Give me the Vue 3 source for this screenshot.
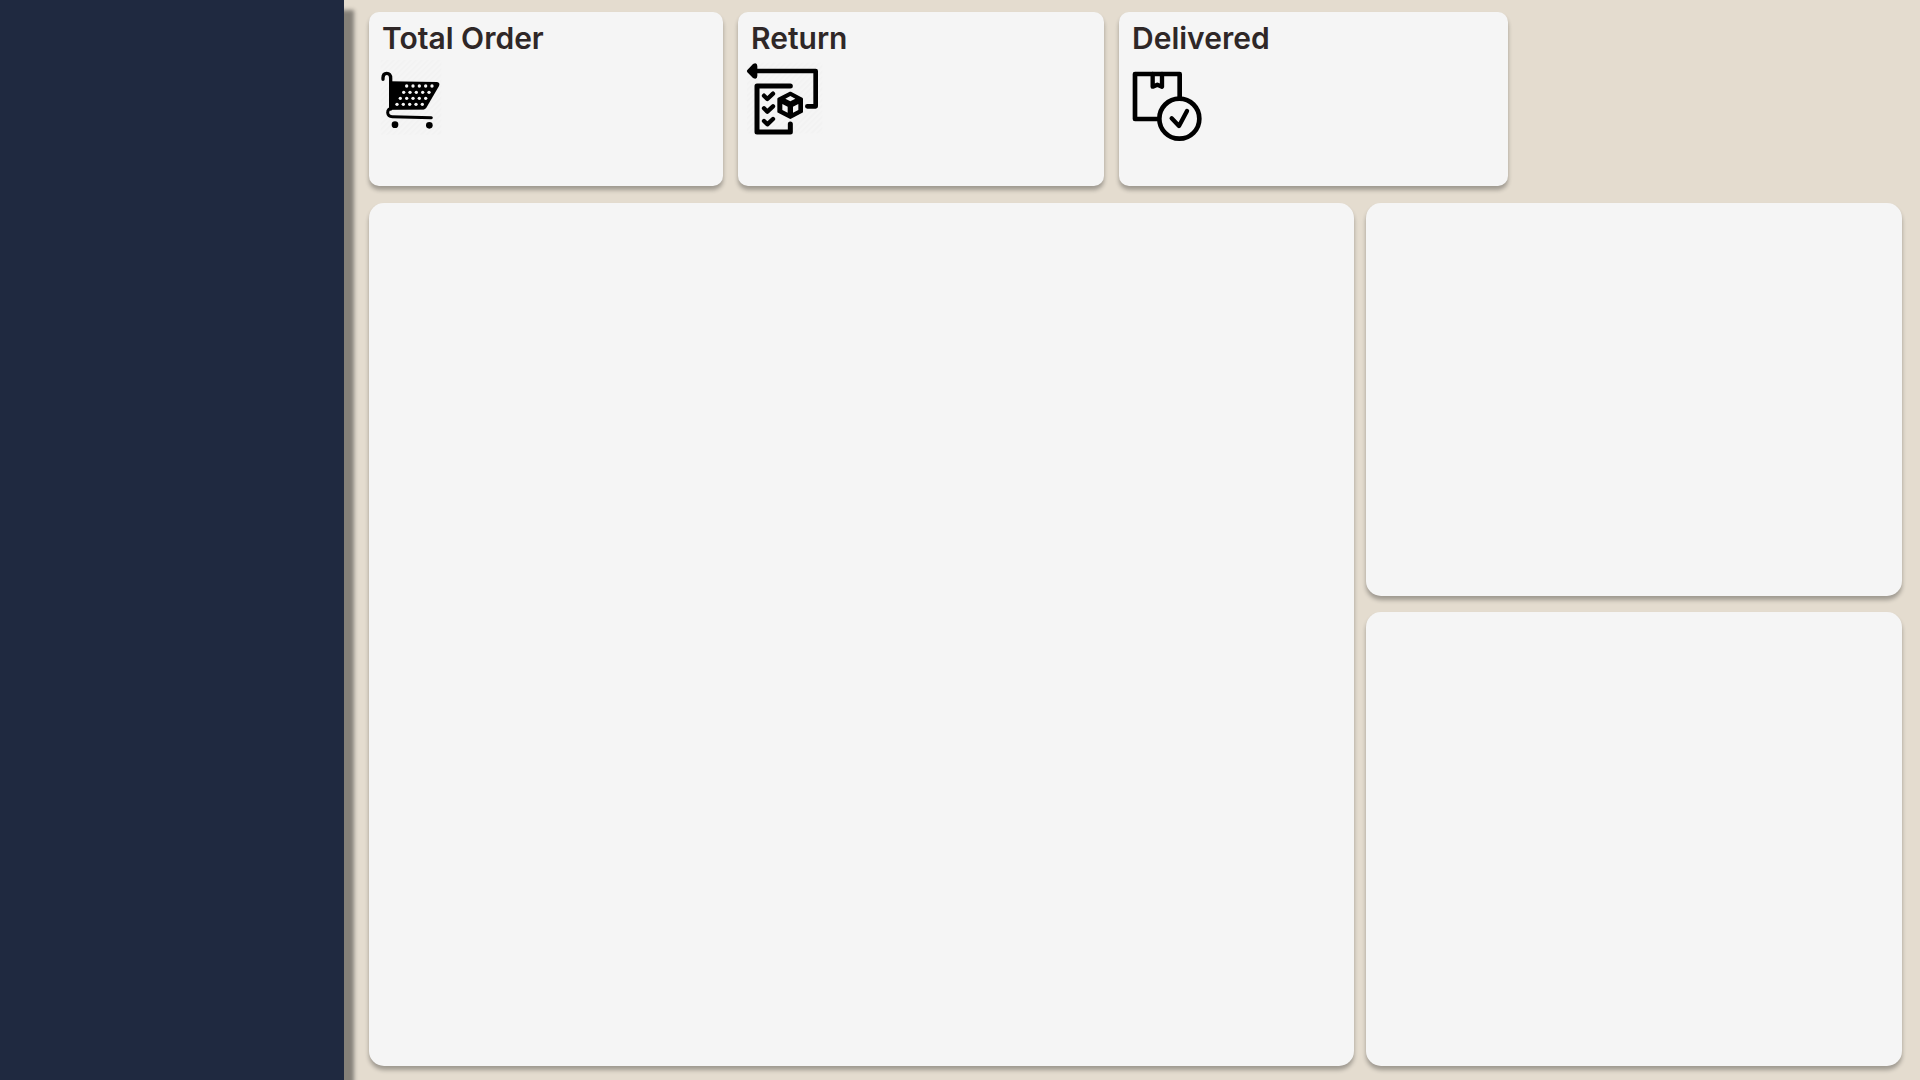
<script setup>
const cartHoles = [
  { y: 78, x: 110 },
  { y: 97, x: 101 },
  { y: 115, x: 91 },
  { y: 133, x: 81 },
].flatMap((row) => [0, 1, 2, 3, 4].map((i) => ({ x: row.x + i * 19, y: row.y })))
</script>

<template>
  <div class="dashboard">
    <aside class="sidebar"></aside>
    <main class="content">
      <div class="stats">
        <section class="card stat">
          <h2>Total Order</h2>
          <svg class="icon" viewBox="24 0 240 240" aria-hidden="true">
            <defs>
              <pattern id="hatch" width="12" height="12" patternUnits="userSpaceOnUse" patternTransform="rotate(45)">
                <rect width="5" height="12" fill="#f2f2f2" />
              </pattern>
            </defs>
            <rect x="32" y="0" width="182" height="224" fill="url(#hatch)" />
            <path class="line" stroke-width="10" d="M39 58V53Q39 40 50 40Q62 40 62 55V147" />
            <path d="M60 64L201 66Q211 68 207 78L169 143Q166 148 160 148H60Z" />
            <path class="line" stroke-width="9" d="M160 144L66 145Q53 146 53 158Q54 170 67 170L184 173" />
            <circle cx="75" cy="194" r="10" />
            <circle cx="178" cy="196" r="10" />
            <circle v-for="hole in cartHoles" :key="`${hole.x}-${hole.y}`" class="light" :cx="hole.x" :cy="hole.y" r="5" />
          </svg>
        </section>
        <section class="card stat">
          <h2>Return</h2>
          <svg class="icon" viewBox="36 30 240 240" aria-hidden="true">
            <rect x="36" y="38" width="226" height="212" fill="url(#hatch)" />
            <path class="line" stroke-width="14" d="M60 63H242V169H217" />
            <path d="M37 60L54 42Q66 35 67 48V78Q66 91 54 84L37 67Q34 63 37 60Z" />
            <path class="line" stroke-width="15" d="M166 108H66V246H166V222" />
            <path class="line" stroke-width="13" d="M87 137L97 147L114 131M87 175L97 185L114 169M87 213L97 223L114 207" />
            <path class="line solid" stroke-width="8" d="M166 129L200 147V185L166 203L131 185V147Z" />
            <path class="light" d="M166 138L181 146L166 154L151 146ZM142 162L158 170V188L142 180ZM174 170L190 162V180L174 188Z" />
          </svg>
        </section>
        <section class="card stat">
          <h2>Delivered</h2>
          <svg class="icon" viewBox="21 0 240 240" aria-hidden="true">
            <path class="line" stroke-width="14" d="M112 177H42V42H176V112" />
            <path class="line" stroke-width="13" d="M95 42V80L109 74L123 80V42" />
            <circle class="line" stroke-width="14" cx="175" cy="176" r="60" />
            <path class="line" stroke-width="13" d="M152 175L174 198L198 153" />
          </svg>
        </section>
      </div>
      <div class="panels">
        <section class="card panel"></section>
        <div class="side-panels">
          <section class="card panel"></section>
          <section class="card panel"></section>
        </div>
      </div>
    </main>
  </div>
</template>

<style>
body {
  margin: 0;
  background: #e4dccf;
}
</style>

<style scoped>
.dashboard {
  display: flex;
  min-height: 100vh;
  overflow: hidden;
  background: #e4dccf;
  font-family: Inter, "Liberation Sans", sans-serif;
  color: #2f2727;
}

.sidebar {
  flex: 0 0 344px;
  background: #1f2940;
  box-shadow: 10px 10px 4px rgba(0, 0, 0, 0.42);
}

.content {
  display: flex;
  flex: 1;
  flex-direction: column;
  gap: 17px;
  min-width: 0;
  padding: 12px 18px 14px 25px;
}

.card {
  box-sizing: border-box;
  background: #f5f5f5;
  box-shadow: 0 4px 4px rgba(0, 0, 0, 0.3);
}

.stats {
  display: grid;
  grid-template-columns: 354fr 366fr 389fr 379fr;
  gap: 15px;
}

.stat {
  min-height: 174px;
  padding: 8px 9px;
  border-radius: 10px;
}

.stat h2 {
  margin: 0 0 4px;
  padding-left: 4px;
  font-size: 30px;
  font-weight: 600;
  line-height: 36px;
}

.icon {
  display: block;
  width: 80px;
  height: 80px;
  overflow: visible;
}

.line {
  fill: none;
  stroke: #000;
  stroke-linecap: round;
  stroke-linejoin: round;
}

.solid {
  fill: #000;
}

.light {
  fill: #f5f5f5;
}

.panels {
  display: grid;
  flex: 1;
  grid-template-columns: 985fr 536fr;
  gap: 12px;
}

.panel {
  border-radius: 15px;
}

.side-panels {
  display: grid;
  grid-template-rows: 393fr 454fr;
  gap: 16px;
}
</style>
